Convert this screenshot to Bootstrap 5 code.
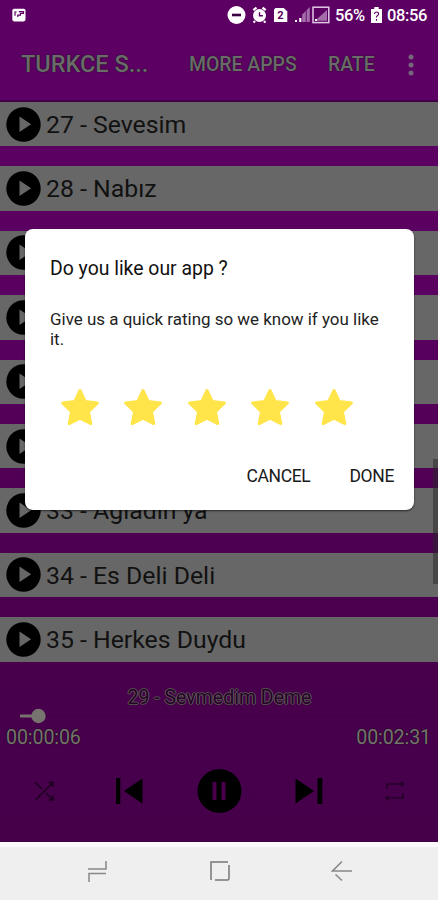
<!DOCTYPE html>
<html lang="tr">
<head>
<meta charset="utf-8">
<meta name="viewport" content="width=device-width, initial-scale=1">
<title>Turkce</title>
<link href="https://cdn.jsdelivr.net/npm/bootstrap@5.3.0/dist/css/bootstrap.min.css" rel="stylesheet">
<style>
body{font-family:Roboto,sans-serif;line-height:1;color:#111;background:#efefef}
.screen{width:438px;height:900px}
.app-bg{height:842px;background:linear-gradient(#5d0064 0,#5a0060 35%,#4e0053 62%,#48004c 80%,#46004a 100%)}
.status{height:30px;padding:0 11px 0 12px;color:#fff}
.status-text{font-size:16.5px;font-weight:500;letter-spacing:-.35px;padding-top:2px}
.appbar{height:72px;padding:1px 23px 2px 21px;color:#6b6b6b;font-weight:500;border-bottom:2px solid #430049;text-shadow:0 0 1px #111,0 0 1px #222}
.app-title{font-size:23.5px;width:168px}
.action{font-size:19.4px}
.rate{width:80px}
.song-list{height:560px}
.song{height:44.4px;margin-bottom:20px;padding-left:6px;background:#676767;font-size:24.8px}
.song svg{margin-right:5px}
.song span{padding-top:2px}
.scroll-thumb{right:0;top:459px;width:5px;height:125px;background:rgba(40,40,40,.5)}
.now{font-size:19.5px;height:24px;margin-top:26px;padding-left:1px;color:#260029;text-shadow:-1px 0 0 #5c5a55,1px 0 0 #5c5a55,0 -1px 0 #4f4d4a,0 1px 0 #4f4d4a}
.seek{height:16px;margin-top:-4px;padding-left:20px}
.times{font-size:19.6px;letter-spacing:-.1px;padding:4px 7px 0 6px;color:#77736f;text-shadow:0 0 1px #111,0 0 1px #111}
.controls{height:50px;margin-top:18px;padding:0 31px 0 32px}
.dialog{left:25px;top:229px;width:389px;height:281px;border-radius:8px;padding:29px 20px 24px 25px;border:0;box-shadow:0 1px 2px rgba(0,0,0,.6)}
.dialog h1{font-size:19.4px;line-height:22px;margin:0;color:#111}
.dialog p{font-size:16.95px;line-height:20px;margin:29px 0 0;color:#222}
.stars{margin:37px 0 0 8px;gap:19.4px}
.dlg-btn{font-size:17.5px;line-height:20px;padding:0;border:0;border-radius:0;color:#1a1a1a;letter-spacing:-.35px}
.cancel{margin-right:39px}
.sysnav{height:58px;background:#efefef;border-top:5px solid #fafafa;padding:0 85px 5px 86px}
</style>
<script src="https://cdn.jsdelivr.net/npm/bootstrap@5.3.0/dist/js/bootstrap.bundle.min.js"></script>
</head>
<body>
<svg class="d-none" xmlns="http://www.w3.org/2000/svg">
<symbol id="play" viewBox="0 0 35 35"><circle cx="17.5" cy="17.5" r="17.2" fill="#000"/><path d="M13.5 9.5v15.6l11.6-7.8z" fill="#676767"/></symbol>
<symbol id="star" viewBox="0 0 44 44"><path d="M22 4.5l5.2 11 12.2 1.5-9 8.6 2.4 12-10.8-5.4-10.8 5.4 2.4-12-9-8.6 12.2-1.5z" fill="#ffe54a" stroke="#ffe54a" stroke-width="3" stroke-linejoin="round"/></symbol>
</svg>
<div class="screen position-relative overflow-hidden">
<div class="app-bg d-flex flex-column">
<div class="status d-flex align-items-center">
<svg width="14" height="14" viewBox="0 0 14 14"><rect x=".3" y=".8" width="13.2" height="12.6" rx="1.8" fill="#fff"/><path d="M3 7.800V4h1.600M6.800 3.600h4.700v1.800H8.400v1.800H5.800V9" fill="none" stroke="#5c0063" stroke-width="1.200"/></svg>
<svg class="ms-auto" width="104" height="20" viewBox="0 0 104 20">
<circle cx="9.5" cy="10" r="9" fill="#fff"/><rect x="5" y="8.7" width="9" height="2.6" fill="#3a0040"/>
<circle cx="32.5" cy="10.5" r="6.500" fill="#fff"/><path d="M26.3 5.2l3.2-2.6M38.7 5.2l-3.2-2.6M28 16l-1.4 1.6M37 16l1.4 1.6" stroke="#fff" stroke-width="2.200"/><path d="M32.5 7.2v3.600h3.400" stroke="#5c0063" stroke-width="1.4" fill="none"/>
<path d="M48.5 3h8.3l3.5 3.5V17H47V4.5z" fill="#fff"/><text x="53.5" y="14.2" font-size="11" font-weight="700" text-anchor="middle" fill="#5c0063">2</text>
<path d="M68 17v-2h2v2zM72.2 17v-4h2.2v4z" fill="#fff"/><path d="M75.2 17V9.5L78.8 6v11zM79.6 17V5.2L82.8 2v15z" fill="#a46ca8"/>
<rect x="86" y="2.2" width="15.8" height="15.4" fill="none" stroke="#e3c8e6" stroke-width="1.5"/><path d="M88 15.8L100 5v10.8z" fill="#a46ca8"/><path d="M88 16v-2h2v2z" fill="#fff"/></svg>
<span class="status-text ms-1">56%</span>
<svg class="mx-1 flex-shrink-0" width="14" height="18" viewBox="-2 0 14 18"><path d="M3.3 1h4.4v2H11v14H0V3h3.3z" fill="#fff"/><path d="M3.5 8Q3.5 6 5.6 6t2 2.2Q7 9.4 5.5 10.5v1M5.5 13v1.7" fill="none" stroke="#5c0063" stroke-width="1.1"/></svg>
<span class="status-text">08:56</span>
</div>
<nav class="appbar d-flex align-items-center flex-shrink-0">
<span class="app-title">TURKCE S...</span>
<span class="action">MORE APPS</span>
<span class="action rate ms-auto">RATE</span>
<svg width="7" height="22" viewBox="0 0 7 22" fill="#77657a"><circle cx="3" cy="3" r="2.5"/><circle cx="3" cy="11" r="2.5"/><circle cx="3" cy="19" r="2.5"/></svg>
</nav>
<div class="song-list flex-shrink-0 overflow-hidden">
<div class="song d-flex align-items-center"><svg width="35" height="35"><use href="#play"/></svg><span>27 - Sevesim</span></div>
<div class="song d-flex align-items-center"><svg width="35" height="35"><use href="#play"/></svg><span>28 - Nabız</span></div>
<div class="song d-flex align-items-center"><svg width="35" height="35"><use href="#play"/></svg></div>
<div class="song d-flex align-items-center"><svg width="35" height="35"><use href="#play"/></svg></div>
<div class="song d-flex align-items-center"><svg width="35" height="35"><use href="#play"/></svg></div>
<div class="song d-flex align-items-center"><svg width="35" height="35"><use href="#play"/></svg></div>
<div class="song d-flex align-items-center"><svg width="35" height="35"><use href="#play"/></svg><span>33 - Agladin ya</span></div>
<div class="song d-flex align-items-center"><svg width="35" height="35"><use href="#play"/></svg><span>34 - Es Deli Deli</span></div>
<div class="song d-flex align-items-center"><svg width="35" height="35"><use href="#play"/></svg><span>35 - Herkes Duydu</span></div>
</div>
<div class="player">
<div class="now text-center">29 - Sevmedim Deme</div>
<div class="seek"><svg class="d-block" width="398" height="16"><path d="M18 8h380" stroke="#410045" stroke-width="1"/><path d="M0 8h18" stroke="#77736f" stroke-width="3"/><circle cx="18.500" cy="8" r="7.2" fill="#77736f"/></svg></div>
<div class="times d-flex justify-content-between"><span>00:00:06</span><span>00:02:31</span></div>
<div class="controls d-flex align-items-center justify-content-between">
<svg width="24" height="24" viewBox="0 0 24 24" fill="none" stroke="#1d001f" stroke-width="1.5"><path d="M3.500 21L21 3.500M16.500 3.500H21V8M3.500 3.500l6.500 6.500M14 14l7 7M21 16.500V21h-4.500"/></svg>
<svg class="ms-2" width="28" height="28" viewBox="1 0 28 28"><path d="M.5 1h4.800v26h-4.800zM27.500 1.500v25L9 14z"/></svg>
<svg width="46" height="46" viewBox="0 0 46 46"><circle cx="22.500" cy="23" r="22"/><path d="M15.500 14h4v18h-4zM24.500 14h4v18h-4z" fill="#48004c"/></svg>
<svg class="me-2" width="28" height="28" viewBox="0 0 28 28"><path d="M22.500 1h4.800v26h-4.800zM.5 1.500v25L19 14z"/></svg>
<svg width="24" height="24" viewBox="0 0 24 24" fill="none" stroke="#240027" stroke-width="1.500"><path d="M4 10V5h17M18 2.500l2.500 2.500-2.500 2.500M20 14v5H3M5.500 16.500L3 19l2.500 2.500"/></svg>
</div>
</div>
</div>
<div class="sysnav d-flex align-items-center justify-content-between">
<svg width="22" height="24" viewBox="0 0 22 24" fill="none" stroke="#888" stroke-width="1.500"><path d="M2 10h18V2M20 14.500H3V23"/></svg>
<svg width="22" height="22" viewBox="0 0 22 22" fill="none" stroke="#777" stroke-width="1.500"><path d="M2 20V2h17M20 5v13.500q0 1.500-1.500 1.500H6"/></svg>
<svg width="22" height="22" viewBox="0 0 22 22" fill="none" stroke="#888" stroke-width="1.600"><path d="M11 1.500L1.500 11H21M4.500 14.500l6.500 6"/></svg>
</div>
<div class="scroll-thumb position-absolute"></div>
<div class="dialog modal-content position-absolute bg-white">
<h1 class="fw-normal">Do you like our app ?</h1>
<p>Give us a quick rating so we know if you like it.</p>
<div class="stars d-flex">
<svg width="44" height="44"><use href="#star"/></svg><svg width="44" height="44"><use href="#star"/></svg><svg width="44" height="44"><use href="#star"/></svg><svg width="44" height="44"><use href="#star"/></svg><svg width="44" height="44"><use href="#star"/></svg>
</div>
<div class="d-flex justify-content-end mt-auto"><button class="btn dlg-btn cancel">CANCEL</button><button class="btn dlg-btn">DONE</button></div>
</div>
</div>
</body>
</html>
